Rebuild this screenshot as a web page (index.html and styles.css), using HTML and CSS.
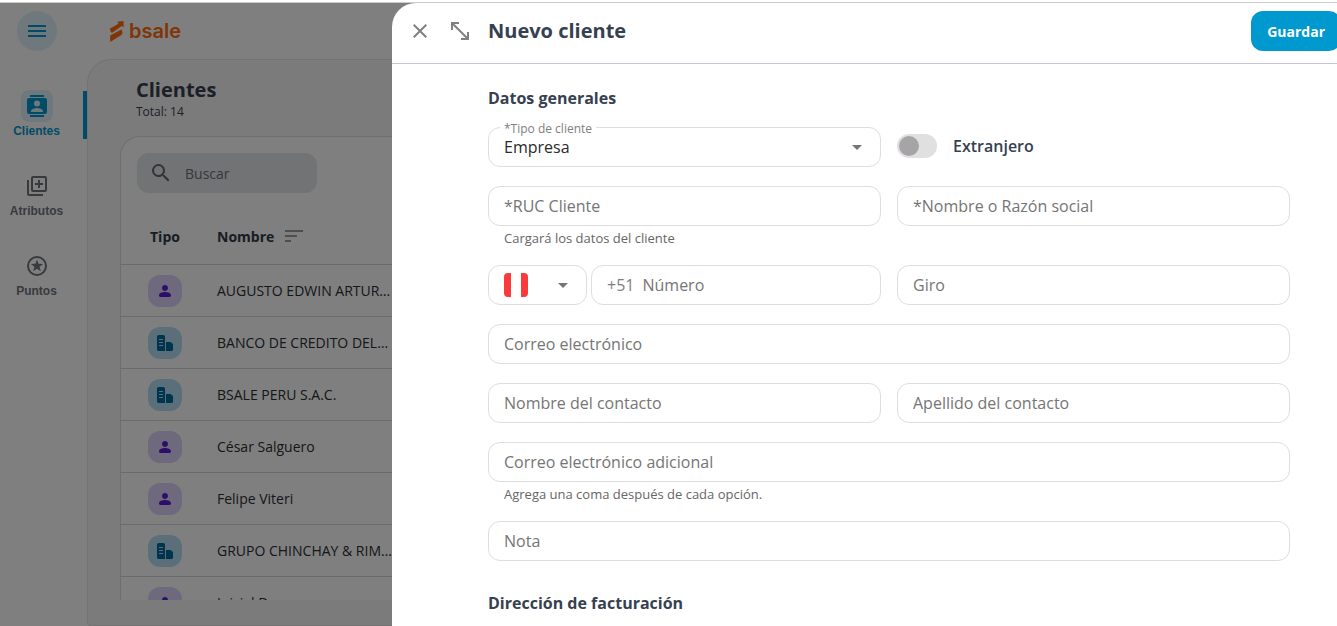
FILE: index.html
```html
<!DOCTYPE html>
<html lang="es">
<head>
<meta charset="utf-8">
<meta name="viewport" content="width=device-width, initial-scale=1">
<title>Nuevo cliente</title>
<link rel="stylesheet" href="styles.css">
</head>
<body>
<svg class="defs" aria-hidden="true">
  <symbol id="person" viewBox="0 0 24 24"><path d="M12 12c2.500 0 4.500-2 4.500-4.500S14.500 3 12 3 7.500 5 7.500 7.500 9.500 12 12 12zM12 13.500c-4 0-9 1.500-9 5 0 1.500.7 2.500 2.200 2.500h13.600c1.500 0 2.200-1 2.200-2.500 0-3.500-5-5-9-5z"/></symbol>
  <symbol id="company" viewBox="0 0 16 16"><path fill-rule="evenodd" d="M1.500 0h5A1.500 1.500 0 0 1 8 1.500V16H1.500A1.500 1.500 0 0 1 0 14.500v-13A1.500 1.500 0 0 1 1.500 0zM2 4v1h4V4zM2 7v1h4V7zM2 10v1h4v-1z"/><path d="M9 7h4.500l2.500 2v5.500a1.500 1.500 0 0 1-1.500 1.500H9z"/></symbol>
</svg>
<div class="app">
  <aside class="sidebar">
    <button class="menu" aria-label="Menú"><svg class="icon" viewBox="0 0 24 24"><path d="M3 18h18v-2H3v2zm0-5h18v-2H3v2zm0-7v2h18V6H3z"/></svg></button>
    <nav class="nav">
      <a class="nav-item active" href="#"><span class="nav-icon"><svg class="icon" viewBox="0 0 24 24"><path d="M19 1H5v2h14V1zM5 23h14v-2H5v2zM20 4H4c-1.100 0-2 .9-2 2v12c0 1.100.9 2 2 2h16c1.100 0 2-.9 2-2V6c0-1.100-.9-2-2-2zm-8 2.500a3 3 0 1 1 0 6 3 3 0 0 1 0-6zM18 18H6v-1c0-2 4-3.100 6-3.100s6 1.100 6 3.100v1z"/></svg></span>Clientes</a>
      <a class="nav-item" href="#"><span class="nav-icon"><svg class="icon" viewBox="0 0 24 24"><path d="M4 6H2v14c0 1.100.9 2 2 2h14v-2H4V6zm16-4H8c-1.100 0-2 .9-2 2v12c0 1.100.9 2 2 2h12c1.100 0 2-.9 2-2V4c0-1.100-.9-2-2-2zm0 14H8V4h12v12zm-7-2h2v-3h3V9h-3V6h-2v3h-3v2h3v3z"/></svg></span>Atributos</a>
      <a class="nav-item" href="#"><span class="nav-icon"><svg class="icon" viewBox="0 0 24 24"><path d="M12 2a10 10 0 1 0 0 20 10 10 0 0 0 0-20zm0 18a8 8 0 1 1 0-16 8 8 0 0 1 0 16z"/><path d="M12 5.500l1.550 4.360 4.630.13-3.670 2.820 1.310 4.440L12 14.640l-3.820 2.610 1.310-4.440-3.670-2.820 4.630-.13z"/></svg></span>Puntos</a>
    </nav>
  </aside>
  <div class="main">
    <header class="brand"><svg class="brand-mark" viewBox="0 0 14 21"><path d="M0 7.500 8.500 2.800 7.300.7 13.500 0l.2 6.300-2-1.200L1.800 12A6 6 0 0 1 0 7.500z"/><path d="M.2 21v-6.500L11.500 8.500c1.200 1.800 1.200 4 .2 5.200z"/></svg><span class="brand-name">bsale</span></header>
    <section class="content">
      <h1 class="page-title">Clientes</h1>
      <p class="total">Total: 14</p>
      <div class="card">
        <label class="search"><svg class="icon" viewBox="0 0 24 24"><path d="M15.500 14h-.79l-.28-.27A6.470 6.470 0 0 0 16 9.500 6.500 6.500 0 1 0 9.500 16c1.610 0 3.090-.59 4.230-1.570l.27.28v.79l5 4.990L20.490 19l-4.990-5zm-6 0C7.010 14 5 11.990 5 9.500S7.010 5 9.500 5 14 7.010 14 9.500 11.990 14 9.500 14z"/></svg><input class="search-input" type="search" placeholder="Buscar" aria-label="Buscar"></label>
        <table class="clients">
          <thead><tr><th class="type">Tipo</th><th><span class="sort">Nombre <svg class="icon" viewBox="0 0 24 24"><path d="M3 18h6v-2H3v2zM3 6v2h18V6H3zm0 7h12v-2H3v2z"/></svg></span></th></tr></thead>
          <tbody>
            <tr><td class="type"><span class="badge person"><svg class="glyph"><use href="#person"/></svg></span></td><td>AUGUSTO EDWIN ARTUR…</td></tr>
            <tr><td class="type"><span class="badge company"><svg class="glyph"><use href="#company"/></svg></span></td><td>BANCO DE CREDITO DEL…</td></tr>
            <tr><td class="type"><span class="badge company"><svg class="glyph"><use href="#company"/></svg></span></td><td>BSALE PERU S.A.C.</td></tr>
            <tr><td class="type"><span class="badge person"><svg class="glyph"><use href="#person"/></svg></span></td><td>César Salguero</td></tr>
            <tr><td class="type"><span class="badge person"><svg class="glyph"><use href="#person"/></svg></span></td><td>Felipe Viteri</td></tr>
            <tr><td class="type"><span class="badge company"><svg class="glyph"><use href="#company"/></svg></span></td><td>GRUPO CHINCHAY &amp; RIM…</td></tr>
            <tr><td class="type"><span class="badge person"><svg class="glyph"><use href="#person"/></svg></span></td><td>Inicial D</td></tr>
          </tbody>
        </table>
      </div>
    </section>
  </div>
</div>
<div class="overlay">
  <form class="drawer">
    <header class="drawer-head">
      <button class="icon-btn" type="button" aria-label="Cerrar"><svg class="icon" viewBox="0 0 24 24"><path d="M19 6.410 17.590 5 12 10.590 6.410 5 5 6.410 10.590 12 5 17.590 6.410 19 12 13.410 17.590 19 19 17.590 13.410 12z"/></svg></button>
      <button class="icon-btn" type="button" aria-label="Expandir"><svg class="icon" viewBox="0 0 24 24"><path d="M3 3h8v2H6.400L19 17.600V13h2v8h-8v-2h4.600L5 6.400V11H3z"/></svg></button>
      <h2 class="drawer-title">Nuevo cliente</h2>
      <button class="save" type="submit">Guardar</button>
    </header>
    <div class="form">
      <h3 class="section-title">Datos generales</h3>
      <div class="field">
        <div class="box">
          <label class="float-label" for="tipo">*Tipo de cliente</label>
          <select class="control select" id="tipo"><option>Empresa</option><option>Persona</option></select>
          <svg class="arrow" viewBox="0 0 10 5"><path d="M0 0h10L5 5z"/></svg>
        </div>
      </div>
      <label class="switch-row"><input class="switch" type="checkbox">Extranjero</label>
      <div class="field">
        <div class="box"><input class="control" aria-label="RUC Cliente" placeholder="*RUC Cliente"></div>
        <p class="help">Cargará los datos del cliente</p>
      </div>
      <div class="field"><div class="box"><input class="control" aria-label="Nombre o Razón social" placeholder="*Nombre o Razón social"></div></div>
      <div class="field phone">
        <button class="box country" type="button" aria-label="País: Perú"><span class="flag"></span><svg class="arrow" viewBox="0 0 10 5"><path d="M0 0h10L5 5z"/></svg></button>
        <label class="box number"><span class="prefix">+51</span><input class="control" type="tel" aria-label="Número" placeholder="Número"></label>
      </div>
      <div class="field"><div class="box"><input class="control" aria-label="Giro" placeholder="Giro"></div></div>
      <div class="field wide"><div class="box"><input class="control" type="email" aria-label="Correo electrónico" placeholder="Correo electrónico"></div></div>
      <div class="field"><div class="box"><input class="control" aria-label="Nombre del contacto" placeholder="Nombre del contacto"></div></div>
      <div class="field"><div class="box"><input class="control" aria-label="Apellido del contacto" placeholder="Apellido del contacto"></div></div>
      <div class="field wide">
        <div class="box"><input class="control" aria-label="Correo electrónico adicional" placeholder="Correo electrónico adicional"></div>
        <p class="help">Agrega una coma después de cada opción.</p>
      </div>
      <div class="field wide"><div class="box"><input class="control" aria-label="Nota" placeholder="Nota"></div></div>
      <h3 class="section-title next">Dirección de facturación</h3>
    </div>
  </form>
</div>
</body>
</html>
```

FILE: styles.css
```css
* { box-sizing: border-box; }
html, body { height: 100%; }
body { margin: 0; padding-top: 2px; overflow: hidden; background: #fff; color: #36414f; font-family: "Open Sans", "Noto Sans", sans-serif; font-size: 14px; }
h1, h2, h3, p { margin: 0; }
button, input, select { font: inherit; color: inherit; }
button { border: 0; padding: 0; background: none; cursor: pointer; }
.defs { display: none; }
.icon { display: block; flex: none; width: 24px; height: 24px; fill: currentColor; }

.app { display: flex; height: 100%; border-top: 1px solid #ccc; }
.sidebar { flex: none; width: 87px; padding-top: 8px; }
.menu { display: grid; place-items: center; width: 40px; height: 40px; margin-left: 17px; border-radius: 50%; background: #dff2fa; color: #0099cf; }
.nav { display: flex; flex-direction: column; gap: 32px; padding-top: 40px; }
.nav-item { display: flex; flex-direction: column; align-items: center; height: 48px; padding-right: 10px; border-right: 4px solid transparent; color: #70757d; font: bold 12px/16px "Liberation Sans", Arial, sans-serif; text-decoration: none; }
.nav-icon { display: grid; place-items: center; width: 32px; height: 32px; margin: -1px 0 1px; border-radius: 8px; }
.active { border-color: #0099cf; border-radius: 2px 0 0 2px; color: #0099cf; }
.active .nav-icon { background: #dff2fa; }

.main { display: flex; flex: 1; flex-direction: column; min-width: 0; }
.brand { display: flex; align-items: center; gap: 5px; height: 56px; padding-left: 23px; color: #ff6a0a; }
.brand-mark { width: 14px; height: 21px; fill: currentColor; }
.brand-name { font: 600 20px/24px Inter, sans-serif; }
.content { display: flex; flex: 1; flex-direction: column; min-height: 0; padding: 16px 32px 25px; border: 1px solid #e6e6e6; border-right: 0; border-radius: 24px 0 0 4px; background: #f7f7f8; }
.page-title { padding-left: 16px; font-size: 20px; line-height: 28px; }
.total { padding-left: 16px; font-size: 12px; line-height: 16px; }
.card { flex: 1; min-height: 0; margin-top: 16px; overflow: hidden; border: 1px solid #dcdde0; border-bottom: 0; border-radius: 20px 20px 0 0; background: #fff; }
.search { display: flex; align-items: center; gap: 10px; width: 180px; height: 40px; margin: 16px; padding: 0 12px; border-radius: 12px; background: #e4e6ea; color: #62666d; }
.search-input { width: 100%; min-width: 0; border: 0; outline: 0; background: none; }
.search-input::placeholder { color: #6c7077; opacity: 1; }
.clients { width: 100%; border-collapse: collapse; color: #2b2e33; }
.clients th, .clients td { height: 52px; padding: 0; border-bottom: 1px solid #d6d7d9; text-align: left; white-space: nowrap; }
.clients th { height: 55px; color: #303a48; }
.clients .type { width: 96px; padding-left: 27px; }
.clients td.type { padding-top: 2px; }
.clients th.type { padding-left: 29px; }
.sort { display: flex; align-items: center; gap: 8px; }
.sort .icon { color: #9a9c9f; }
.badge { display: grid; place-items: center; width: 34px; height: 32px; border-radius: 12px; }
.person { background: #dcd2fb; color: #5a1fd0; }
.company { background: #b6dff5; color: #006b9f; }
.glyph { width: 16px; height: 16px; fill: currentColor; }

.overlay { position: fixed; inset: 3px 0 0; display: flex; padding-left: 392px; overflow: hidden; background: rgba(0, 0, 0, .5); }
.drawer { flex: 1; min-width: 0; border-radius: 24px 0 0 0; background: #fff; }
.drawer-head { display: flex; align-items: center; height: 61px; padding: 0 0 4px 16px; border-bottom: 1px solid #c8c8d4; }
.icon-btn { margin-right: 16px; color: #808080; }
.drawer-title { flex: 1; font-size: 20px; line-height: 28px; }
.save { height: 40px; margin-right: -4px; padding: 0 16px; border-radius: 12px; background: #0099cf; color: #fff; font-weight: 700; }
.form { display: grid; grid-template-columns: 1fr 1fr; gap: 19px 16px; padding: 22px 47px 0 96px; }
.section-title { grid-column: 1 / -1; margin-bottom: -2px; font-size: 16px; line-height: 24px; }
.next { margin-top: 11px; }
.wide { grid-column: 1 / -1; }
.box { position: relative; display: flex; align-items: center; width: 100%; height: 40px; border: 1px solid #dedede; border-radius: 12px; background: #fff; }
.control { width: 100%; min-width: 0; height: 38px; padding: 0 15px; border: 0; outline: 0; border-radius: 12px; background: none; color: #2b2b2b; font-size: 16px; }
.control::placeholder { color: #757575; opacity: 1; }
.select { appearance: none; }
.float-label { position: absolute; top: -7px; left: 11px; padding: 0 4px; background: #fff; color: #808080; font-size: 12px; line-height: 16px; }
.arrow { position: absolute; right: 18px; width: 10px; height: 5px; fill: #757575; pointer-events: none; }
.help { padding: 4px 16px 0; color: #666; font-size: 13px; line-height: 16px; }
.switch-row { display: flex; align-items: center; gap: 16px; height: 37px; font-size: 16px; font-weight: 600; }
.switch { display: flex; align-items: center; appearance: none; width: 40px; height: 24px; margin: 0; padding: 2px; border-radius: 12px; background: #e0e0e0; }
.switch::before { content: ""; width: 20px; height: 20px; border-radius: 50%; background: #a6a4a7; }
.switch:checked { justify-content: flex-end; background: #0099cf; }
.phone { display: flex; gap: 4px; }
.country { flex: none; width: 99px; padding-left: 15px; }
.flag { width: 24px; height: 24px; border-radius: 4px; background: linear-gradient(90deg, #fb3a3c 7px, #fff 7px 17px, #fb3a3c 17px); }
.number { padding-left: 15px; }
.prefix { color: #808080; font-size: 16px; }
.number .control { padding-left: 8px; }
```
